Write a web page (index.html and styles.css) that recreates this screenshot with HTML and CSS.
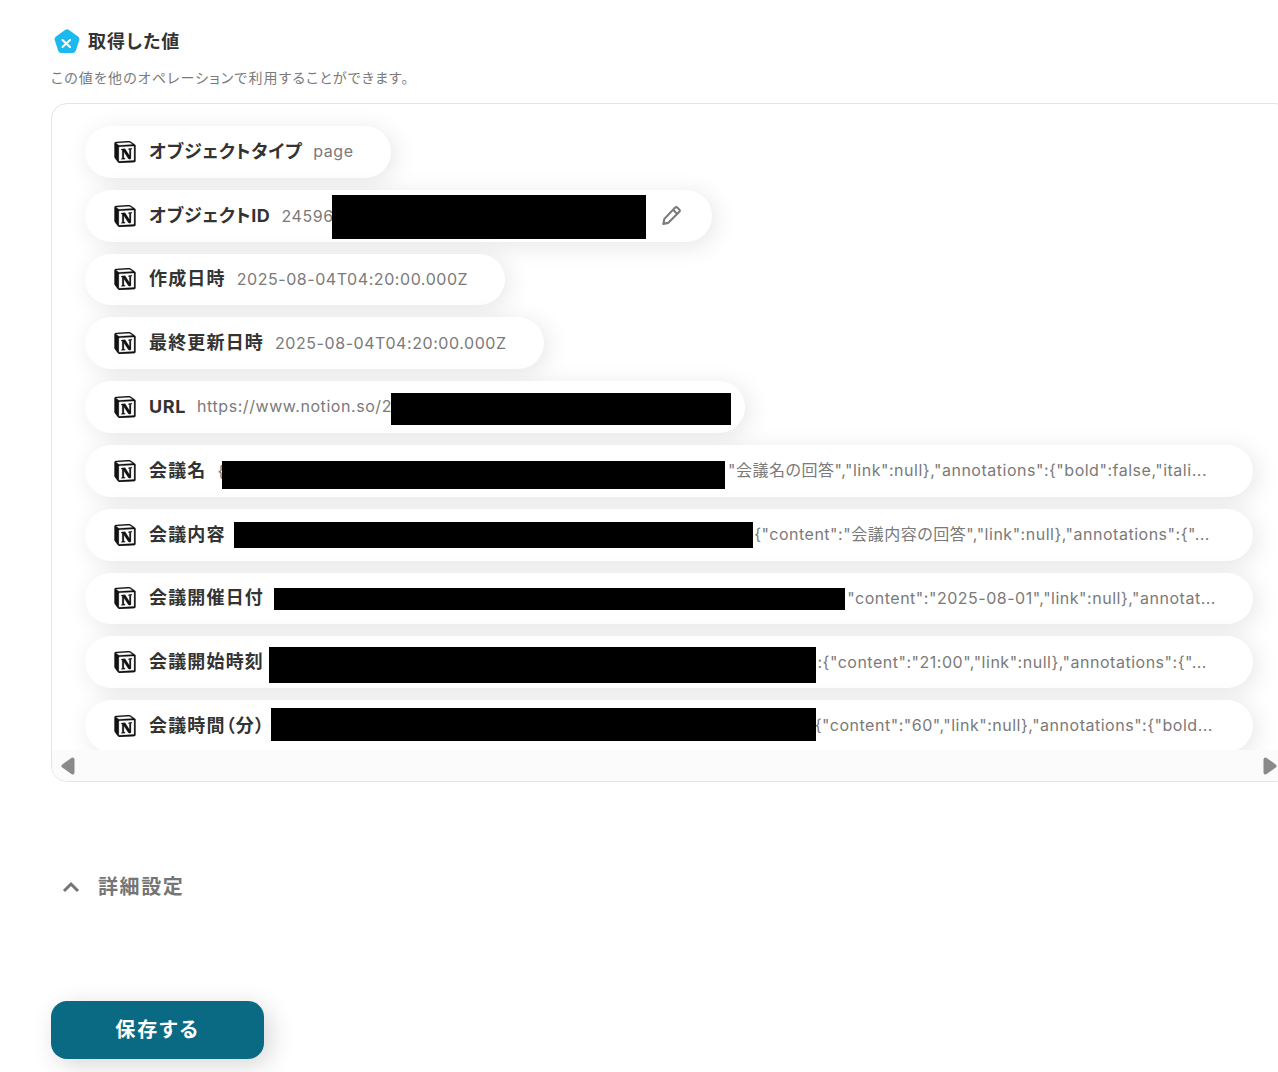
FILE: index.html
```html
<!DOCTYPE html>
<html lang="ja">
<head>
    <meta charset="UTF-8">
    <title>取得した値</title>
    <link rel="stylesheet" href="styles.css">
</head>
<body>
    <svg class="defs" width="0" height="0">
        <symbol id="notion" viewBox="0 0 24 24">
            <path d="M4.459 4.208c.746.606 1.026.56 2.428.466l13.215-.793c.28 0 .047-.28-.046-.326L17.86 1.968c-.42-.326-.981-.7-2.055-.607L3.01 2.295c-.466.046-.56.28-.374.466zm.793 3.08v13.904c0 .747.373 1.027 1.214.98l14.523-.84c.841-.046.935-.56.935-1.167V6.354c0-.606-.233-.933-.748-.887l-15.177.887c-.56.047-.747.327-.747.933zm14.337.745c.093.42 0 .84-.42.888l-.7.14v10.264c-.608.327-1.168.514-1.635.514-.748 0-.935-.234-1.495-.933l-4.577-7.186v6.952L12.21 19s0 .84-1.168.84l-3.222.186c-.093-.186 0-.653.327-.746l.84-.233V9.854L7.822 9.76c-.094-.42.14-1.026.793-1.073l3.456-.233 4.764 7.279v-6.44l-1.215-.14c-.093-.514.28-.887.747-.933zM1.936 1.035l13.31-.98c1.634-.14 2.055-.047 3.082.7l4.249 2.986c.7.513.934.653.934 1.213v16.378c0 1.026-.373 1.634-1.68 1.726l-15.458.934c-.98.047-1.448-.093-1.962-.747l-3.129-4.06c-.56-.747-.793-1.306-.793-1.96V2.667c0-.839.374-1.54 1.447-1.632z"/>
        </symbol>
    </svg>

    <div class="page">
        <div class="heading">
            <svg class="badge" viewBox="0 0 26 26">
                <path d="M11 1a3.400 3.400 0 0 1 4 0l9 6.500a3.400 3.400 0 0 1 1.200 3.800l-3.400 10.500a3.400 3.400 0 0 1-3.200 2.300H7.400a3.400 3.400 0 0 1-3.200-2.300L.8 11.300A3.400 3.400 0 0 1 2 7.500z" fill="#1cb9ee"/>
                <path d="M8.500 11l7.500 7M16 11l-7.500 7" stroke="#fff" stroke-width="2" stroke-linecap="round"/>
            </svg>
            <h2>取得した値</h2>
        </div>
        <p class="note">この値を他のオペレーションで利用することができます。</p>

        <div class="panel">
            <div class="rows">
                <div class="pill pill-type">
                    <svg class="notion"><use href="#notion"/></svg>
                    <span class="label label-tight">オブジェクトタイプ</span>
                    <span class="value">page</span>
                </div>
                <div class="pill pill-id">
                    <svg class="notion"><use href="#notion"/></svg>
                    <span class="label label-tight">オブジェクトID</span>
                    <span class="value">24596</span>
                    <svg class="pencil" viewBox="0 0 20 20">
                        <path d="M13.300 2.700a1.800 1.800 0 0 1 2.500 0l1.500 1.500a1.800 1.800 0 0 1 0 2.500L7 17l-4.800 1 1-4.800zM11.500 4.500l4 4" fill="none" stroke="#7c7c7c" stroke-width="2" stroke-linejoin="round"/>
                    </svg>
                    <span class="redact redact-id"></span>
                </div>
                <div class="pill">
                    <svg class="notion"><use href="#notion"/></svg>
                    <span class="label">作成日時</span>
                    <span class="value">2025-08-04T04:20:00.000Z</span>
                </div>
                <div class="pill">
                    <svg class="notion"><use href="#notion"/></svg>
                    <span class="label">最終更新日時</span>
                    <span class="value">2025-08-04T04:20:00.000Z</span>
                </div>
                <div class="pill pill-url">
                    <svg class="notion"><use href="#notion"/></svg>
                    <span class="label label-tight">URL</span>
                    <span class="value">https://www.notion.so/2</span>
                    <span class="redact redact-url"></span>
                </div>
                <div class="pill pill-wide tail-name">
                    <svg class="notion"><use href="#notion"/></svg>
                    <span class="label">会議名</span>
                    <span class="value">{</span>
                    <span class="value tail">"会議名の回答","link":null},"annotations":{"bold":false,"itali...</span>
                    <span class="redact redact-name"></span>
                </div>
                <div class="pill pill-wide tail-body">
                    <svg class="notion"><use href="#notion"/></svg>
                    <span class="label">会議内容</span>
                    <span class="value tail">{"content":"会議内容の回答","link":null},"annotations":{"...</span>
                    <span class="redact redact-body"></span>
                </div>
                <div class="pill pill-wide tail-date">
                    <svg class="notion"><use href="#notion"/></svg>
                    <span class="label">会議開催日付</span>
                    <span class="value tail">"content":"2025-08-01","link":null},"annotat...</span>
                    <span class="redact redact-date"></span>
                </div>
                <div class="pill pill-wide tail-start">
                    <svg class="notion"><use href="#notion"/></svg>
                    <span class="label">会議開始時刻</span>
                    <span class="value tail">:{"content":"21:00","link":null},"annotations":{"...</span>
                    <span class="redact redact-start"></span>
                </div>
                <div class="pill pill-wide tail-time">
                    <svg class="notion"><use href="#notion"/></svg>
                    <span class="label">会議時間（分）</span>
                    <span class="value tail">{"content":"60","link":null},"annotations":{"bold...</span>
                    <span class="redact redact-time"></span>
                </div>
            </div>
            <div class="scrollbar">
                <svg class="arrow" viewBox="0 0 14 18"><path d="M11.500 2.500L2.500 9l9 6.500z" fill="#8a8a8a" stroke="#8a8a8a" stroke-width="4" stroke-linejoin="round"/></svg>
                <svg class="arrow" viewBox="0 0 14 18"><path d="M2.500 2.500l9 6.500-9 6.500z" fill="#8a8a8a" stroke="#8a8a8a" stroke-width="4" stroke-linejoin="round"/></svg>
            </div>
        </div>

        <div class="details">
            <svg class="chevron" viewBox="0 0 18 12"><path d="M2 10l7-7 7 7" fill="none" stroke="#757575" stroke-width="3"/></svg>
            <span>詳細設定</span>
        </div>

        <button class="save">保存する</button>
    </div>
</body>
</html>
```

FILE: styles.css
```css
body {
    margin: 0;
    height: 1072px;
    overflow: hidden;
    background-color: white;
    color: #333;
    font-family: Inter, "Noto Sans CJK JP", sans-serif;
    font-feature-settings: "palt";
}

.defs {
    position: absolute;
}

.page {
    padding: 29px 0 0 51px;
}

.heading {
    display: flex;
    align-items: center;
    gap: 8px;
    padding-left: 3px;
}

.badge {
    width: 26px;
    height: 26px;
}

h2 {
    margin: 0;
    font-size: 18px;
    font-weight: 700;
    line-height: 26px;
    letter-spacing: 0.06em;
}

.note {
    margin: 13px 0 0;
    font-size: 14px;
    line-height: 20px;
    color: #7a7a7a;
    letter-spacing: 0.08em;
}

.panel {
    width: 1240px;
    height: 679px;
    margin-top: 15px;
    box-sizing: border-box;
    border: 1px solid #e4e4e4;
    border-radius: 16px;
    overflow: hidden;
    background-color: white;
}

.rows {
    display: flex;
    flex-direction: column;
    align-items: flex-start;
    gap: 12px;
    height: 646px;
    box-sizing: border-box;
    padding: 22px 0 0 33px;
    overflow: hidden;
}

.pill {
    position: relative;
    display: flex;
    flex-shrink: 0;
    align-items: center;
    height: 51.8px;
    box-sizing: border-box;
    padding: 0 37px 0 28.5px;
    border-radius: 26px;
    background-color: white;
    box-shadow: 4px 4px 24px rgba(0, 0, 0, 0.1);
    white-space: nowrap;
}

.pill-id {
    width: 627px;
}

.pill-url {
    width: 660px;
}

.pill-wide {
    width: 1168px;
}

.notion {
    width: 22px;
    height: 22px;
    margin-right: 13.5px;
    fill: #111;
    stroke: #111;
    stroke-width: 0.3;
}

.label {
    margin-right: 11px;
    font-size: 18px;
    font-weight: 700;
    line-height: 24px;
    letter-spacing: 0.065em;
}

.label-tight {
    letter-spacing: 0.035em;
}

.value {
    font-size: 16px;
    line-height: 24px;
    color: #7a7a7a;
    letter-spacing: 0.035em;
}

.tail {
    margin-left: auto;
    letter-spacing: 0.032em;
}

.pill-type .value,
.pill-url .value,
.tail-name .tail,
.tail-body .tail,
.tail-time .tail {
    margin-bottom: 2px;
}

.tail-name { padding-right: 46px; }
.tail-body { padding-right: 43px; }
.tail-date { padding-right: 37px; }
.tail-start { padding-right: 46px; }
.tail-time { padding-right: 40px; }

.pencil {
    position: absolute;
    top: 15px;
    left: 576px;
    width: 21px;
    height: 21px;
}

/* blacked out values from the source picture */
.redact {
    position: absolute;
    background-color: black;
}

.redact-id { left: 247px; top: 5px; width: 314px; height: 44px; }
.redact-url { left: 306px; top: 12px; width: 340px; height: 32px; }
.redact-name { left: 137px; top: 16px; width: 503px; height: 28px; }
.redact-body { left: 149px; top: 13px; width: 519px; height: 26px; }
.redact-date { left: 189px; top: 15px; width: 571px; height: 22px; }
.redact-start { left: 184px; top: 11px; width: 547px; height: 36px; }
.redact-time { left: 186px; top: 8px; width: 545px; height: 33px; }

.scrollbar {
    display: flex;
    justify-content: space-between;
    align-items: center;
    height: 31px;
    padding: 0 13px 0 9px;
    background-color: #fbfbfb;
}

.arrow {
    width: 14px;
    height: 18px;
}

.details {
    display: flex;
    align-items: center;
    gap: 18px;
    margin: 91px 0 0 11px;
    font-size: 20px;
    font-weight: 700;
    line-height: 28px;
    color: #757575;
    letter-spacing: 0.08em;
}

.chevron {
    width: 18px;
    height: 12px;
}

.save {
    display: block;
    width: 213px;
    height: 58px;
    margin-top: 100px;
    padding: 0 0 4px;
    border: none;
    border-radius: 16px;
    background-color: #0b6a83;
    box-shadow: 6px 6px 24px rgba(0, 0, 0, 0.16);
    color: white;
    font-family: inherit;
    font-feature-settings: inherit;
    font-size: 20px;
    font-weight: 700;
    letter-spacing: 0.1em;
    cursor: pointer;
}
```
